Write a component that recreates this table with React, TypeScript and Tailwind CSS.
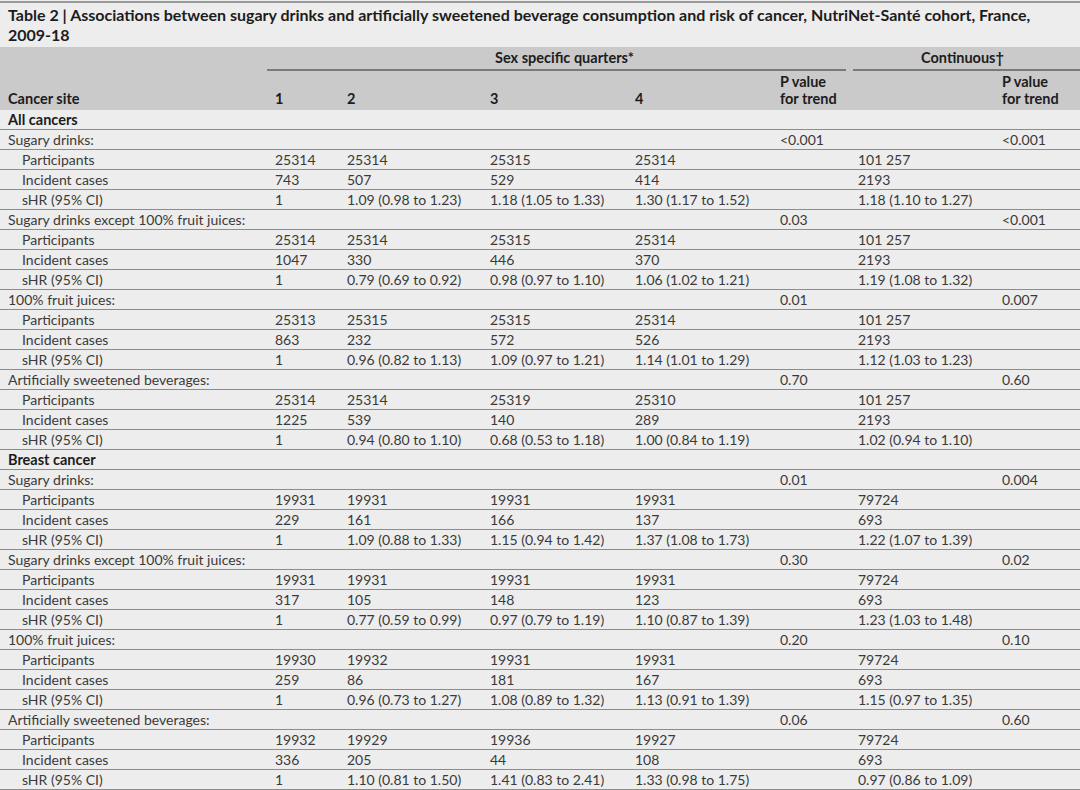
const sections = [
  {
    site: 'All cancers',
    groups: [
      {
        name: 'Sugary drinks:',
        p: '<0.001',
        pc: '<0.001',
        participants: ['25314', '25314', '25315', '25314', '101 257'],
        cases: ['743', '507', '529', '414', '2193'],
        shr: ['1', '1.09 (0.98 to 1.23)', '1.18 (1.05 to 1.33)', '1.30 (1.17 to 1.52)', '1.18 (1.10 to 1.27)'],
      },
      {
        name: 'Sugary drinks except 100% fruit juices:',
        p: '0.03',
        pc: '<0.001',
        participants: ['25314', '25314', '25315', '25314', '101 257'],
        cases: ['1047', '330', '446', '370', '2193'],
        shr: ['1', '0.79 (0.69 to 0.92)', '0.98 (0.97 to 1.10)', '1.06 (1.02 to 1.21)', '1.19 (1.08 to 1.32)'],
      },
      {
        name: '100% fruit juices:',
        p: '0.01',
        pc: '0.007',
        participants: ['25313', '25315', '25315', '25314', '101 257'],
        cases: ['863', '232', '572', '526', '2193'],
        shr: ['1', '0.96 (0.82 to 1.13)', '1.09 (0.97 to 1.21)', '1.14 (1.01 to 1.29)', '1.12 (1.03 to 1.23)'],
      },
      {
        name: 'Artificially sweetened beverages:',
        p: '0.70',
        pc: '0.60',
        participants: ['25314', '25314', '25319', '25310', '101 257'],
        cases: ['1225', '539', '140', '289', '2193'],
        shr: ['1', '0.94 (0.80 to 1.10)', '0.68 (0.53 to 1.18)', '1.00 (0.84 to 1.19)', '1.02 (0.94 to 1.10)'],
      },
    ],
  },
  {
    site: 'Breast cancer',
    groups: [
      {
        name: 'Sugary drinks:',
        p: '0.01',
        pc: '0.004',
        participants: ['19931', '19931', '19931', '19931', '79724'],
        cases: ['229', '161', '166', '137', '693'],
        shr: ['1', '1.09 (0.88 to 1.33)', '1.15 (0.94 to 1.42)', '1.37 (1.08 to 1.73)', '1.22 (1.07 to 1.39)'],
      },
      {
        name: 'Sugary drinks except 100% fruit juices:',
        p: '0.30',
        pc: '0.02',
        participants: ['19931', '19931', '19931', '19931', '79724'],
        cases: ['317', '105', '148', '123', '693'],
        shr: ['1', '0.77 (0.59 to 0.99)', '0.97 (0.79 to 1.19)', '1.10 (0.87 to 1.39)', '1.23 (1.03 to 1.48)'],
      },
      {
        name: '100% fruit juices:',
        p: '0.20',
        pc: '0.10',
        participants: ['19930', '19932', '19931', '19931', '79724'],
        cases: ['259', '86', '181', '167', '693'],
        shr: ['1', '0.96 (0.73 to 1.27)', '1.08 (0.89 to 1.32)', '1.13 (0.91 to 1.39)', '1.15 (0.97 to 1.35)'],
      },
      {
        name: 'Artificially sweetened beverages:',
        p: '0.06',
        pc: '0.60',
        participants: ['19932', '19929', '19936', '19927', '79724'],
        cases: ['336', '205', '44', '108', '693'],
        shr: ['1', '1.10 (0.81 to 1.50)', '1.41 (0.83 to 2.41)', '1.33 (0.98 to 1.75)', '0.97 (0.86 to 1.09)'],
      },
    ],
  },
]

const cols = 'grid grid-cols-[267px_72px_143px_145px_145px_78px_144px_86px]'

function DataRow({ label, values }: { label: string; values: string[] }) {
  return (
    <div className={`${cols} h-[20px] items-center border-b border-[#8c8c8c] leading-none`}>
      <div className="pl-[22px]">{label}</div>
      <div className="pl-2">{values[0]}</div>
      <div className="pl-2">{values[1]}</div>
      <div className="pl-2">{values[2]}</div>
      <div className="pl-2">{values[3]}</div>
      <div />
      <div className="pl-2">{values[4]}</div>
      <div />
    </div>
  )
}

export default function App() {
  return (
    <div
      className="w-[1080px] h-[790px] overflow-hidden bg-[#ededed] text-[#3a3a3a] text-[14px] font-normal"
      style={{ fontFamily: 'Lato, "Open Sans", sans-serif' }}
    >
      {/* Title */}
      <div className="border-t-2 border-[#9a9a9a] mt-[1px] px-2 pt-[2px] h-[46px] text-[16px] font-bold leading-[20px] text-[#1c1c1c]">
        Table 2 | Associations between sugary drinks and artificially sweetened beverage consumption and risk of cancer, NutriNet-Santé cohort, France, 2009-18
      </div>

      {/* Column headers */}
      <div className="bg-[#cacaca] h-[63px] font-bold text-[14.5px] text-[#1c1c1c]">
        <div className={`${cols} h-[23px]`}>
          <div />
          <div className="col-span-5 mr-[4px] border-b-2 border-[#7a7a7a] flex items-center justify-center pl-4">
            Sex specific quarters*
          </div>
          <div className="col-span-2 ml-[3px] border-b-2 border-[#7a7a7a] flex items-center justify-center pr-2">
            Continuous†
          </div>
        </div>
        <div className={`${cols} h-[40px] items-end pb-[3px] leading-[17px]`}>
          <div className="pl-2">Cancer site</div>
          <div className="pl-2">1</div>
          <div className="pl-2">2</div>
          <div className="pl-2">3</div>
          <div className="pl-2">4</div>
          <div className="pl-2">P value<br />for trend</div>
          <div />
          <div className="pl-2">P value<br />for trend</div>
        </div>
      </div>

      {/* Body */}
      {sections.map((section) => (
        <div key={section.site}>
          <div className="h-[20px] flex items-center pl-2 border-b border-[#8c8c8c] font-bold text-[14.5px] text-[#1c1c1c]">
            {section.site}
          </div>
          {section.groups.map((g) => (
            <div key={g.name}>
              <div className={`${cols} h-[20px] items-center border-b border-[#8c8c8c] leading-none`}>
                <div className="pl-2 col-span-5 whitespace-nowrap">{g.name}</div>
                <div className="pl-2">{g.p}</div>
                <div />
                <div className="pl-2">{g.pc}</div>
              </div>
              <DataRow label="Participants" values={g.participants} />
              <DataRow label="Incident cases" values={g.cases} />
              <DataRow label="sHR (95% CI)" values={g.shr} />
            </div>
          ))}
        </div>
      ))}
    </div>
  )
}
